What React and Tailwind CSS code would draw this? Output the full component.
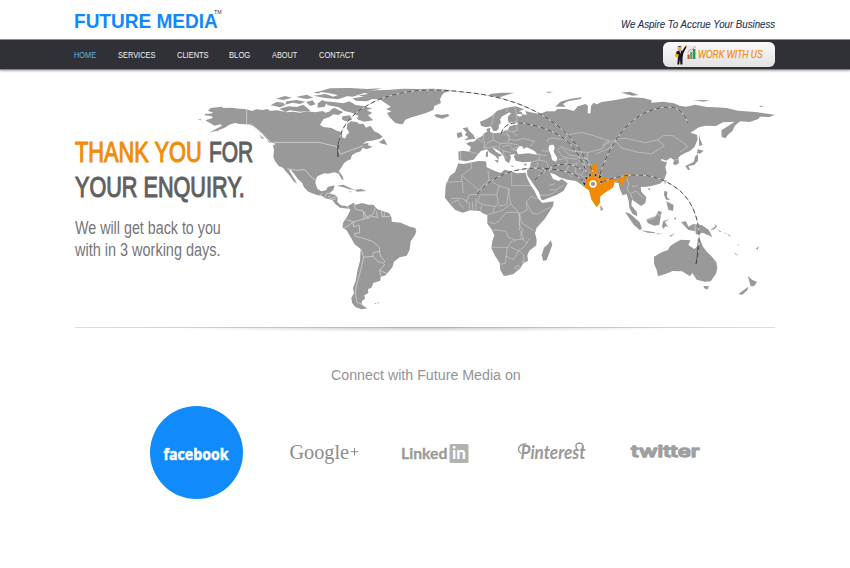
import { useLayoutEffect, useRef, useState } from "react";

// Condenses a line of text so that it fills the given width.
function Fit({ w, className = "", children }) {
  const ref = useRef(null);
  const [s, setS] = useState(1);
  useLayoutEffect(() => {
    setS(w / ref.current.offsetWidth);
  }, [w]);
  return (
    <span className="inline-block whitespace-nowrap" style={{ width: w }}>
      <span
        ref={ref}
        className={"inline-block origin-left whitespace-nowrap " + className}
        style={{ transform: `scaleX(${s})` }}
      >
        {children}
      </span>
    </span>
  );
}

const NAV = [
  ["HOME", 22.5, "ml-[74px] text-[#5fb0f5]"],
  ["SERVICES", 37.5, "ml-[21.5px] text-[#f2f2f2]"],
  ["CLIENTS", 31.5, "ml-[21.5px] text-[#f2f2f2]"],
  ["BLOG", 21, "ml-5 text-[#f2f2f2]"],
  ["ABOUT", 25.5, "ml-[22px] text-[#f2f2f2]"],
  ["CONTACT", 35.5, "ml-[22px] text-[#f2f2f2]"],
];

function WorkIcon() {
  return (
    <svg className="h-[22px] w-6 shrink-0" viewBox="0 0 24 22">
      <circle cx="5.6" cy="4" r="2.2" fill="#f6a55c" />
      <path d="M3.6 3Q5.500.8 7.6 3Z" fill="#4a3020" />
      <path d="M2.500 7.500L5.500 6.200L8.300 6.800L11.500 2L12.600 2.700L9.300 9.500L8.600 13.500L8.400 20.500H6.400L6 15L5.200 20.500H3.300L4 13L2 11Z" fill="#15151b" />
      <path d="M5.300 6.500H7L6.300 10Z" fill="#fff" />
      <path d="M1.300 9.500L4.800 10.500L4 13.700L.9 12.500Z" fill="#f4b400" />
      <path d="M11.400 2.200L12 .7L13 1.500L12.500 2.900Z" fill="#f6a55c" />
      <rect x="13.200" y="1.800" width="8.800" height="13.400" fill="#f4e6e8" />
      <rect x="13.500" y="10.500" width="2.200" height="4.500" fill="#e24a3b" />
      <rect x="16.200" y="8" width="2.200" height="7" fill="#3eae5b" />
      <rect x="18.900" y="5" width="2.500" height="10" fill="#3b8f66" />
      <path d="M13.500 8.300L16.500 5.500L18 6.200L21.400 2.300" fill="none" stroke="#e0706c" strokeWidth=".8" />
    </svg>
  );
}

function WorldMap() {
  return (
    <svg className="col-start-1 row-start-1 h-[250px] w-[850px]" viewBox="0 72 850 250" fill="#999">
      {/* North America */}
      <g transform="translate(190 80) scale(.33333)">
        <path d="M62 84L95 80L100 84L122 83L150 86L170 88L185 93L200 88L218 90L232 87L240 92L262 91L290 97L310 95L330 98L352 94L375 97L398 93L407 98L420 94L424 88L434 84L446 90L460 96L445 105L430 103L420 110L400 118L390 134L400 141L425 144L440 152L455 157L458 174L466 175L470 164L478 158L470 145L472 132L482 124L500 126L508 132L520 131L528 143L541 137L553 154L566 160L578 170L570 176L545 182L530 184L518 192L536 188L534 196L548 200L530 208L518 203L512 214L498 218L486 225L482 238L470 243L460 252L455 262L446 273L458 289L461 300L455 298L446 281L433 277L415 281L403 280L388 286L380 292L376 308L382 326L394 334L408 331L414 320L434 316L430 330L418 340L437 346L443 354L442 365L452 376L468 378L478 386L462 385L450 383L436 372L427 360L406 355L395 347L380 345L355 335L342 322L337 310L323 296L313 282L303 270L296 268L304 283L315 299L321 311L311 304L298 286L286 272L279 263L266 258L255 243L250 230L252 210L249 196L258 192L240 185L228 175L216 160L202 147L190 138L170 133L150 132L134 129L118 134L104 143L85 151L58 158L78 147L96 137L91 133L74 137L61 130L46 121L68 114L66 109L44 106L47 101L60 101L70 98L54 92Z" />
        <path d="M242 76L260 66L280 68L285 76L270 82ZM268 86L295 79L320 81L340 74L352 84L362 93L330 95L300 91L286 96ZM258 56L285 48L306 53L280 60ZM290 64L320 60L346 65L330 72L308 68L285 74ZM318 51L350 44L370 53L350 57ZM348 66L368 61L376 73L361 78ZM384 70L397 60L411 67L404 80L382 83ZM370 47L407 42L430 50L450 43L475 47L445 58L405 54ZM384 35L420 25L480 24L530 27L575 25L530 37L488 50L440 44L415 39ZM405 64L435 67L460 70L478 64L497 75L520 78L547 86L530 90L547 99L534 106L550 121L522 125L500 117L506 108L486 98L463 93L445 81L413 76ZM457 109L480 106L486 120L466 124L456 118ZM567 187L582 176L592 195L576 191ZM440 317L460 314L486 326L501 330L477 328L461 322ZM495 329L515 327L529 333L500 335ZM478 334L487 336L477 337ZM22 118L34 118L33 121ZM79 151L87 147L83 155ZM208 163L222 176L216 177ZM230 180L246 190L236 187ZM488 55L520 50L545 58L530 64L497 62ZM370 37L396 33L385 41Z" />
        <path d="M170 87V134L185 133L200 148L222 166L240 184M251 187H388L410 193L439 199L452 222L488 209L520 197M292 266L320 271L344 269L367 294L378 302M404 352L411 339L425 342M417 357L444 348" fill="none" stroke="#d7d7d7" strokeWidth="2.400" />
      </g>
      {/* Greenland and South America */}
      <g transform="translate(320 80) scale(.33333)">
        <path d="M128 37L170 31L210 29L250 26L300 27L340 26L398 31L372 38L365 47L360 58L363 69L343 78L340 90L318 99L296 106L270 113L255 120L250 131L242 133L225 128L209 112L201 99L215 94L198 88L212 80L190 65L180 58L149 57L134 52L116 46L145 42ZM342 105L354 102L363 105L384 102L388 108L367 116L349 112Z" />
        <path d="M85 377L101 368L107 374L126 369L145 374L160 374L172 388L188 393L207 399L215 413L215 425L242 428L270 440L286 444L289 455L283 468L272 484L269 509L260 527L239 532L222 545L217 562L197 586L182 590L181 602L160 609L154 623L144 628L145 639L133 646L135 656L126 663L125 674L142 685L125 688L106 681L96 668L94 653L102 640L99 624L107 602L112 573L120 542L122 507L104 493L88 465L80 451L67 442L70 427L81 411L91 390L82 379Z" />
        <path d="M103 370L106 388L130 393L132 417L142 411L160 401L166 382M132 417L101 426L79 419M101 426L100 440L118 436L119 459L104 460L105 469L125 473L142 479L157 484L178 501L179 514L160 518L158 529L131 532L124 508M131 532L126 554L118 586L110 613L106 639L111 667L132 675M178 514L182 529L195 545L189 550L171 543L158 528M195 552L179 571L182 588M179 571L201 581M132 394L142 417L155 408L173 413L169 394M184 392L186 411L209 409M193 396V409M68 446L84 438L101 426M7 340L0 347M24 351L33 347M35 359L49 357M65 380L70 377" fill="none" stroke="#dedede" strokeWidth="2" />
        <path d="M164 669h5v2h-5zM173 667h4v3h-4z" />
      </g>
      {/* Europe, Asia and Africa */}
      <g transform="translate(430 80) scale(.33333)">
        <path d="M85 215L98 212L118 215L123 201L108 191L120 185L132 185L141 176L157 168L162 160L172 155L169 147L181 143L180 155L192 160L214 158L228 150L232 137L259 134L268 130L248 126L236 129L233 112L244 98L235 98L215 110L210 119L213 129L206 135L207 145L199 154L190 153L183 139L166 142L153 137L150 125L165 119L185 108L202 92L230 83L257 79L282 88L267 94L276 97L277 103L291 105L285 93L308 98L329 102L350 94L375 94L383 87L408 87L432 93L443 79L467 72L474 78L473 99L481 101L483 78L491 68L500 73L515 66L557 60L600 52L640 54L665 61L664 68L700 65L732 70L749 77L768 80L796 74L830 81L857 82L890 84L924 92L977 96L1034 104L1019 111L990 110L985 117L959 126L932 124L923 129L914 138L908 152L896 162L886 175L875 171L874 151L891 140L914 125L879 127L858 138L826 137L807 142L781 158L801 164L803 178L794 200L780 213L767 218L753 226L745 233L747 249L737 256L729 252L732 240L722 233L709 242L693 236L695 243L711 247L706 262L710 278L702 300L690 311L664 318L652 320L632 321L634 335L649 352L646 369L633 378L615 365L606 359L604 376L620 395L622 409L608 402L598 384L596 363L590 342L578 346L569 327L566 310L553 307L548 322L520 340L509 350L509 368L500 380L486 359L478 330L460 318L438 303L413 299L388 292L374 283L360 278L369 297L386 303L395 297L413 310L401 332L379 345L339 361L333 358L327 337L312 315L292 286L291 271L300 261L303 245L279 247L257 242L251 228L258 222L240 224L243 233L237 250L226 242L222 230L209 214L193 205L187 202L198 215L217 226L206 230L206 240L195 227L180 218L170 208L153 213L145 221L131 239L107 244L86 240Z" />
        <path d="M98 145L113 142L116 151L130 164L136 176L103 181L115 171L104 164L110 158ZM80 160L94 156L98 169L83 175ZM168 216L174 214L174 230L167 230ZM192 239L206 241L203 249ZM241 257L254 258L247 261ZM281 253L291 250L286 258ZM179 42L215 38L253 38L220 48L203 55L185 49ZM376 80L391 65L422 56L455 52L452 57L414 64L399 72L407 80ZM347 35L370 35L356 39ZM573 38L600 35L626 45L607 47ZM790 60L840 61L820 65ZM988 77L1004 78L991 81ZM807 163L811 179L818 194L807 198L807 178ZM801 219L803 208L821 212L810 221ZM804 223L804 242L793 255L775 258L780 270L774 270L766 258L791 246L796 228ZM704 301L710 301L704 315ZM653 327L659 324L661 332ZM511 375L520 388L512 393Z" />
        <path d="M85 250L100 252L145 243L168 244L170 262L193 272L212 279L224 269L240 273L260 280L287 278L290 292L301 314L313 332L324 355L337 369L371 364L369 379L344 417L320 443L315 459L320 479L319 496L298 512L292 526L294 542L280 550L270 566L249 583L222 588L211 571L209 549L194 526L184 504L187 483L193 466L184 447L172 431L172 405L161 401L149 393L121 391L98 398L76 390L59 371L45 353L46 333L47 316L60 287L75 277Z" />
        <path d="M362 481L367 494L350 540L340 543L335 526L342 503L354 493Z" />
        <path d="M259 210L268 198L279 200L278 207L291 202L315 214L321 224L295 220L264 223ZM359 195L371 194L374 203L371 216L382 234L378 245L366 240L363 225L355 207ZM219 135L239 129L258 133L239 139L234 149L223 151L215 154ZM262 102L271 102L278 105L270 110L262 107Z" fill="#fff" />
        <g fill="none" stroke="#d0d0d0" strokeWidth="1.800">
          <path d="M92 216V240M118 214L143 222M142 177L163 188L162 206M163 160L159 178L166 188M188 160L190 180L172 189L163 204L181 203L201 198M189 181L213 190L235 190L238 168L214 159M238 168L228 154M224 150L245 155L262 168M235 178L260 181L280 175L313 184L302 199M213 190L204 203L222 213L243 218M216 200L238 195L250 207L265 201M238 190L262 194L270 202M243 208L258 212M222 210L218 225L231 234M192 102L185 135M232 85L228 97M254 80L258 98L262 122L240 132M260 135L262 151L245 155M318 218L329 227L326 240L303 247M326 240L350 245L360 276M302 260L320 264L324 246M294 267L320 265L345 280M323 223L350 227M332 212L356 214M352 180L366 174L400 178L420 163L454 157L474 162L500 170L539 183L521 191L518 206L475 217L452 216L425 213L393 200L384 209M356 188L349 180M384 211L396 228L416 234L440 238L455 220M398 208L420 226L447 229M382 240L408 235L416 256L409 273L425 292M416 254L440 251L461 230L478 242M439 252L436 277L461 291M473 218L470 240L484 255M520 197L559 177L588 175L646 188L683 180L694 189L703 197L665 221L624 217L573 203L559 184L547 190L536 206L497 222M683 180L701 166L729 167L765 192L773 201L749 216M330 346L358 345L380 333M358 330L380 329L401 315M375 311L358 316M590 293L596 312L592 330L602 341L619 332L633 348L642 355M606 320L624 317M602 342L609 361M549 307L565 303M733 240L743 238M460 240L466 260L455 284" />
          <path d="M123 247L125 264L95 286V304L45 307M96 287L145 330L177 300L174 270M145 330L141 343L116 345L112 363L94 355L62 355M97 304L100 340M177 300L207 318L200 345L205 370L196 379L164 375L143 367L151 344L200 345M207 318L237 326L233 350L230 374L205 378M245 276V317H303M237 326V352L243 372L269 401L291 391L289 367L304 349L321 358M289 367L306 399L322 403L344 389L362 382M269 401L275 429L312 452M269 401L269 436L279 451L270 470L289 488L300 475M243 372L216 392L172 404M229 397H266L268 410L268 447L282 476L257 480L234 472L229 454L208 451L187 450M229 397L208 422L193 431L177 427M184 502H234L242 485L257 481M232 502L226 550L206 554M226 528L251 539L266 512L242 502M266 512L283 500L293 487M266 512L282 525L281 544M63 370L84 359L91 374L102 386M104 363L118 370L118 389M127 365L129 389M138 355V390M151 392L156 374M195 378L188 398" />
          <path d="M257 559l8-4 3 7-7 6-7-3zM276 545l4-3 3 5-4 3z" />
        </g>
        <path d="M480 260L494 253L503 258L499 275L511 289L532 297L551 300L568 299L575 292L596 282L589 296L581 302L577 315L568 303L554 302L548 322L520 340L509 350L509 368L500 380L486 359L478 330L460 318L462 309L469 302L477 288L488 278L481 270Z" fill="#f18a04" stroke="#f18a04" strokeWidth="2.500" />
      </g>
      {/* South-east Asia and Oceania */}
      <g transform="translate(580 170) scale(.33333)">
        <path d="M222 260L245 247L264 240L270 229L284 219L302 209L331 211L325 225L343 237L351 230L353 207L359 206L370 232L381 246L396 260L409 277L412 293L408 311L392 334L374 335L350 329L337 309L330 319L306 304L278 303L258 311L234 319L230 300L222 281ZM370 348L387 349L382 359L373 355ZM503 317L516 329L531 336L522 349L512 349ZM505 350L503 359L487 374L475 372ZM199 148L226 139L236 122L245 126L242 140L238 164L223 167L203 159ZM135 126L150 131L179 157L186 175L180 181L161 164ZM182 181L221 186L228 190L203 188ZM230 190L248 192L231 193ZM268 198L285 189L273 200ZM303 156L318 154L325 170L340 162L365 165L386 179L397 201L368 188L350 194L345 183L325 180ZM250 153L269 147L254 156L265 172L257 168L250 177L246 168ZM253 63L262 65L261 82L271 89L258 89L252 74ZM259 94L281 105L279 123L265 119ZM282 143L289 143L286 151ZM390 180L407 169L403 162L412 168L403 178ZM413 178L424 185L420 187ZM430 186L441 192L436 191ZM442 191L454 199L447 198ZM461 247L476 257L467 254ZM528 236L537 228L533 239ZM471 221L479 226L475 226Z" />
        <path d="M200 148L220 146L232 132L244 138M345 163L346 192" fill="none" stroke="#ddd" strokeWidth="2" />
      </g>
      {/* routes */}
      <g fill="none">
        <path d="M338 157C336 128 351 112 380 99C410 88 438 89 463 92C510 96 555 113 580 150Q588 163 594 173M501 134C505 121 516 121 536 126C563 133 577 146 587 174M477 194C497 170 526 166 551 169S578 177 585 183M535 180C548 163 570 159 583 171M600 174C612 139 633 107 671 107Q683 109 688 123M602 182C630 171 655 173 675 187C697 202 704 232 696 264" stroke="#d2d2d2" strokeWidth="1" />
        <path d="M338 157C336 128 351 112 380 99C410 88 438 89 463 92C510 96 555 113 580 150Q588 163 594 173M501 134C505 121 516 121 536 126C563 133 577 146 587 174M477 194C497 170 526 166 551 169S578 177 585 183M535 180C548 163 570 159 583 171M600 174C612 139 633 107 671 107Q683 109 688 123M602 182C630 171 655 173 675 187C697 202 704 232 696 264" stroke="#484848" strokeWidth=".95" strokeDasharray="4.500 3" />
        <path d="M338 157Q337 150 338.500 142M696 264Q698 255 698 246" stroke="#484848" strokeWidth="1" />
      </g>
      <path d="M585 176.500l3.300 1-2.500 3zM589 173l3 2-3 2.500zM594 173.500l3.500 1-2.600 3zM599 174.500l3 2-3.600 3zM600 180.500l3.500.5-3 3zM582 182l4 .5-1 4z" fill="#222" stroke="#fff" strokeWidth=".4" />
      <circle cx="593" cy="184" r="2.900" fill="#999" stroke="#fff" strokeWidth="1.500" />
    </svg>
  );
}

export default function App() {
  return (
    <div className="h-[568px] w-[850px] overflow-hidden bg-white font-['Liberation_Sans',Arial,sans-serif]">
      <header className="flex h-10 justify-between border-b border-[#8c8c8e] pr-[75px] pl-[74px]">
        <div className="flex items-start">
          <span className="pt-[9px] text-[19.500px] leading-6 font-bold text-[#1188fb]"><Fit w={143.5}>FUTURE MEDIA</Fit></span>
          <span className="-ml-[4px] pt-[9px] text-[6px] leading-[6px] text-[#333]"><Fit w={8}>TM</Fit></span>
        </div>
        <div className="pt-[18px] text-[10px] leading-[14px] text-[#2b3957] italic [-webkit-text-stroke:0.15px_#2b3957]"><Fit w={154}>We Aspire To Accrue Your Business</Fit></div>
      </header>
      <nav className="flex h-[29px] items-center bg-[#303136] shadow-[0_1px_0_#86868a,0_2px_2px_#aaa]">
        {NAV.map(([label, w, cls]) => (
          <a key={label} className={"flex text-[9.5px] leading-[29px] " + cls}><Fit w={w}>{label}</Fit></a>
        ))}
        <a className="mr-[75px] ml-auto flex h-[25px] w-28 items-center rounded-md bg-linear-to-b from-[#fafafa] to-[#e2e2e2] pl-[11px] text-[11.5px] leading-[25px] text-[#f28c0c] italic [-webkit-text-stroke:0.25px_#f28c0c]">
          <WorkIcon /><Fit w={65}>WORK WITH US</Fit>
        </a>
      </nav>
      <main>
        <section className="mt-[3px] grid h-[250px]">
          <WorldMap />
          <div className="z-10 col-start-1 row-start-1 w-[260px] pt-[63px] pl-[75px] text-[#606060]">
            <h1 className="text-[29px] leading-[35px] font-normal [-webkit-text-stroke:1.1px_currentColor]">
              <span className="block h-[35px] whitespace-nowrap">
                <Fit w={127} className="text-[#f28b05]">THANK YOU</Fit>
                <span className="inline-block w-[7px]" />
                <Fit w={44}>FOR</Fit>
              </span>
              <span className="block h-[35px]"><Fit w={170}>YOUR ENQUIRY.</Fit></span>
            </h1>
            <p className="mt-[13px] text-[18px] leading-[21.500px] text-[#75767a]">
              <span className="block"><Fit w={146}>We will get back to you</Fit></span>
              <span className="block"><Fit w={145.5}>with in 3 working days.</Fit></span>
            </p>
          </div>
        </section>
        <div className="mx-[75px] mt-[4.500px]">
          <div className="h-px bg-linear-to-r from-[#dedede] via-[#b2b2b2] to-[#dedede]" />
          <div className="mx-[95px] h-[4px] bg-[radial-gradient(ellipse_50%_100%_at_50%_0%,#d0d0d0,#ffffff)]" />
        </div>
        <h2 className="mt-[33px] pr-[1px] text-center text-[14px] leading-[20px] text-[#939393]"><Fit w={190}>Connect with Future Media on</Fit></h2>
        <section className="mt-[21.500px] ml-[150px] flex h-[94px] items-center">
          <a className="flex h-[93px] w-[93px] self-start rounded-full bg-[#118afc]">
            <svg className="h-[93px] w-[93px]" viewBox="150 406 93 93">
              <text x="163.500" y="460" textLength="65" lengthAdjust="spacingAndGlyphs" fill="#fff" stroke="#fff" strokeWidth=".5" className="font-['Open_Sans',sans-serif] text-[16.500px] font-bold">facebook</text>
            </svg>
          </a>
          <svg className="ml-[45px] h-10 w-[73px]" viewBox="288 433 73 40">
            <text x="289.500" y="459" textLength="59.500" lengthAdjust="spacingAndGlyphs" fill="#8c8c8c" className="font-['Liberation_Serif',serif] text-[21.500px]">Google</text>
            <path d="M354.500 448v7.500M350.800 451.700h7.500" stroke="#8c8c8c" />
          </svg>
          <svg className="ml-[39px] h-10 w-[70px]" viewBox="400 433 70 40">
            <text x="401" y="459" textLength="46.500" lengthAdjust="spacingAndGlyphs" fill="#9a9a9a" stroke="#9a9a9a" strokeWidth=".3" className="font-['Lato',sans-serif] text-[16px] font-bold">Linked</text>
            <rect x="449.500" y="444" width="19" height="19" rx="1.500" fill="#b2b2b2" />
            <text x="452" y="459" textLength="14" lengthAdjust="spacingAndGlyphs" fill="#fff" className="font-['Lato',sans-serif] text-[17px] font-bold">in</text>
          </svg>
          <svg className="ml-[46px] h-10 w-[72px]" viewBox="516 433 72 40">
            <text x="520.500" y="458.500" textLength="65" lengthAdjust="spacingAndGlyphs" fill="#999" className="font-['Lato',sans-serif] text-[18px] font-bold italic">Pinterest</text>
            <path d="M520.500 453Q517 450 519.500 446.500Q522 443.500 526 444M577 449Q574 444 579 443Q584 443 583 449" fill="none" stroke="#999" strokeWidth="1.400" strokeLinecap="round" />
          </svg>
          <svg className="ml-[41px] h-10 w-[73px]" viewBox="629 433 73 40">
            <text x="631" y="457.200" textLength="68.500" lengthAdjust="spacingAndGlyphs" fill="#9f9f9f" stroke="#9f9f9f" strokeWidth="1.300" strokeLinejoin="round" className="font-['Inter',sans-serif] text-[16.500px] font-medium">twitter</text>
          </svg>
        </section>
      </main>
    </div>
  );
}
